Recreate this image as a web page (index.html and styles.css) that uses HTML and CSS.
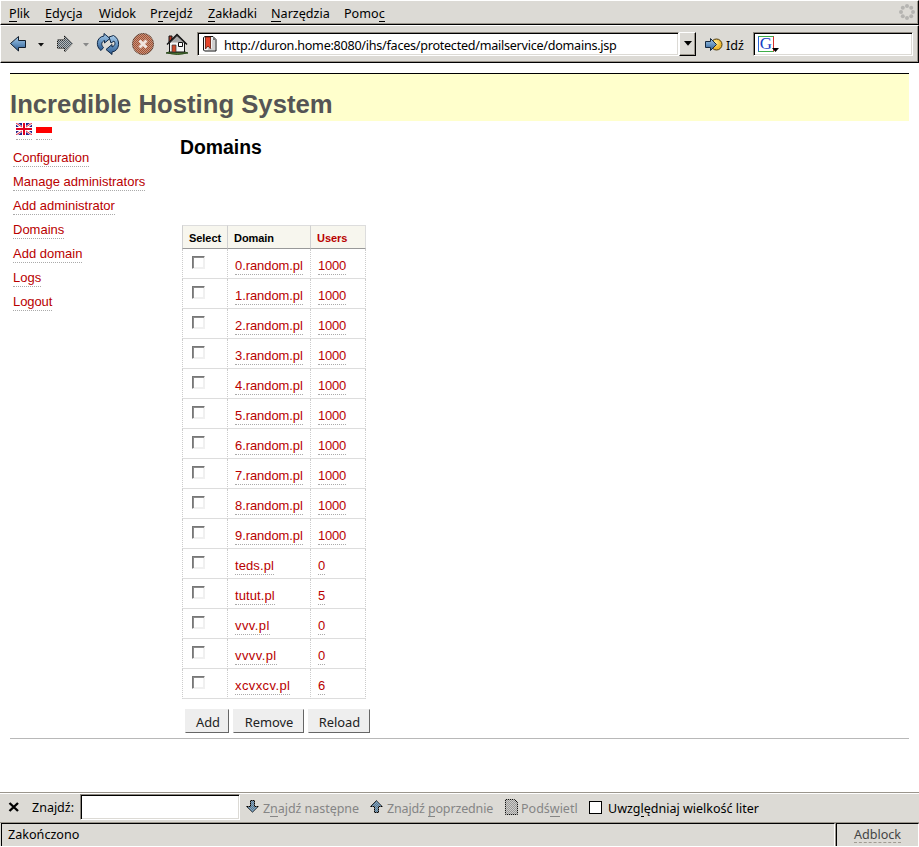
FILE: index.html
```html
<!DOCTYPE html>
<html lang="pl">
<head>
<meta charset="utf-8">
<title>Incredible Hosting System</title>
<link rel="stylesheet" href="styles.css">
</head>
<body>
<svg class="defs" width="0" height="0" aria-hidden="true">
  <defs>
    <linearGradient id="blue" x1="0" y1="0" x2="0" y2="1"><stop offset="0" stop-color="#a9cbe8"/><stop offset=".5" stop-color="#6795c2"/><stop offset="1" stop-color="#2c588d"/></linearGradient>
    <radialGradient id="gold" cx=".4" cy=".35"><stop offset="0" stop-color="#fff0a0"/><stop offset="1" stop-color="#eeb62d"/></radialGradient>
    <pattern id="dither" width="2" height="2" patternUnits="userSpaceOnUse"><path fill="#dcdad5" d="M0 0h1v1H0zM1 1h1v1H1z"/></pattern>
  </defs>
</svg>
<nav class="menubar">
  <span class="m1"><u>P</u>lik</span><span class="m2"><u>E</u>dycja</span><span class="m3"><u>W</u>idok</span><span class="m4">P<u>r</u>zejdź</span><span class="m5"><u>Z</u>akładki</span><span class="m6"><u>N</u>arzędzia</span><span class="m7">Pomo<u>c</u></span>
  <svg class="throbber" width="16" height="16" fill="#b5b4b1"><circle cx="8" cy="2" r="2"/><circle cx="12.2" cy="3.8" r="2"/><circle cx="14" cy="8" r="2"/><circle cx="12.2" cy="12.2" r="2"/><circle cx="8" cy="14" r="2"/><circle cx="3.8" cy="12.2" r="2"/><circle cx="2" cy="8" r="2"/><circle cx="3.8" cy="3.8" r="2"/></svg>
</nav>
<div class="toolbar">
  <svg class="i-back" width="18" height="18"><path d="M1.5 8.5 9.5 1.500v4h7v7h-7v3.500z" fill="url(#blue)" stroke="#111c2b"/></svg>
  <svg class="i-drop" width="6" height="4"><path d="M0 0h6L3 3.5z" fill="#111"/></svg>
  <svg class="i-fwd" width="18" height="18"><path d="M16.500 8.500 8.500 1v4h-7v8h7v4z" fill="#4c5a66" stroke="#111"/><path d="M17 8.500 8 0v5H1v8h7v5z" fill="url(#dither)" opacity=".75"/></svg>
  <svg class="i-drop2" width="6" height="4"><path d="M0 0h6L3 3.500z" fill="#888"/></svg>
  <svg class="i-reload" width="24" height="22"><g fill="url(#blue)" stroke="#0f2745" stroke-linejoin="round"><path d="M5 17.500C-.5 14 0 4 8 3V.5L14 5.500 8.500 10V7.500C5 9 5 12 7.500 14.500z"/><path d="M17.500 2.500C25 6 24 18 16 19v2.500L10 16.500l6-5v2.500c3.500-1.500 3.500-4 2-6L15 10l-2-6z"/></g></svg>
  <svg class="i-stop" width="22" height="22"><circle cx="11" cy="11" r="10.500" fill="#a8502f" stroke="#5b3a2a"/><circle cx="11" cy="11" r="11" fill="url(#dither)" opacity=".5"/><path d="m7.500 7.500 7 7m0-7-7 7" stroke="#f0e4de" stroke-width="3"/></svg>
  <svg class="i-home" width="23" height="22"><path d="M0 20q5-3 11-1 6-2 11 1-10 3-22 0" fill="#507a37" stroke="#2f4c21"/><path d="M3.500 10 11 3l7.500 7v9h-15z" fill="#f4f4f4" stroke="#111"/><path d="M3 3h3v3L3 9z" fill="#b83a27" stroke="#111"/><path d="m11 3 7 6.500H5z" fill="#aaa"/><path d="M1 11.500 11 1.500l10 10" fill="none" stroke="#111" stroke-width="1.500"/><path d="M6 12h4v7H6z" fill="#d24b2b" stroke="#333" stroke-width=".7"/><path d="M12.500 9.500h4v4h-4z" fill="#fff" stroke="#111"/></svg>
  <div class="field url">
    <svg class="i-book" width="14" height="16"><path d="M.5 1.500 2 .5h8l3 3V15H1.500L.5 14z" fill="#f3f3f3" stroke="#111"/><path d="M2.500 1v12l2.500-3 2.500 3V1z" fill="#e5442b" stroke="#5b1509" stroke-width=".8"/><path d="M9 5h3M9 7h3M9 9h3M9 11h3M5 13h7" stroke="#999" stroke-width=".8"/><path d="M10 1v3h3z" fill="#777"/></svg>
    <span class="address">http://duron.home:8080/ihs/faces/protected/mailservice/domains.jsp</span>
  </div>
  <div class="combo"><svg width="8" height="5"><path d="M0 0h8L4 4.700z"/></svg></div>
  <svg class="i-go" width="18" height="16"><circle cx="11.500" cy="7.500" r="5.500" fill="url(#gold)" stroke="#4d3a0a"/><path d="M.5 4.500h5V1.500l6 6-6 6v-3h-5z" fill="url(#blue)" stroke="#14283f"/></svg>
  <span class="go">Idź</span>
  <div class="field search"><div class="g-logo"><span>G</span><svg width="7" height="4"><path d="M0 0h7L3.500 4z"/></svg></div></div>
</div>
<div class="page">
  <h1>Incredible Hosting System</h1>
  <div class="columns">
    <div class="side">
      <div class="flags">
        <a><svg width="16" height="12"><path fill="#fff" d="M0 0h16v12H0z"/><path fill="#24248c" d="M2 0h4v3zM10 0h4l-4 3zM0 1.500 3 4H0zM16 1.500V4h-3zM0 8h3l-3 2.500zM13 8h3v2.500zM6 9v3H2zM10 9l4 3h-4z"/><path d="m0 0 6 4M16 0l-6 4M0 12l6-4m10 4-6-4" stroke="#e2233b"/><path fill="#e2001f" d="M7 0h2v12H7zM0 5h16v2H0z"/></svg></a>
        <a><svg width="16" height="12"><path fill="#fff" d="M0 0h16v6H0z"/><path fill="#f00" d="M0 4h16v6H0z"/></svg></a>
      </div>
      <ul class="links">
        <li><a class="w1">Configuration</a></li><li><a>Manage administrators</a></li><li><a>Add administrator</a></li><li><a>Domains</a></li><li><a>Add domain</a></li><li><a>Logs</a></li><li><a class="w1">Logout</a></li>
      </ul>
    </div>
    <div class="main">
      <h2>Domains</h2>
      <table>
        <thead><tr><th>Select</th><th>Domain</th><th class="sort">Users</th></tr></thead>
        <tbody>
          <tr><td><i></i></td><td><a>0.random.pl</a></td><td><a>1000</a></td></tr>
          <tr><td><i></i></td><td><a>1.random.pl</a></td><td><a>1000</a></td></tr>
          <tr><td><i></i></td><td><a>2.random.pl</a></td><td><a>1000</a></td></tr>
          <tr><td><i></i></td><td><a>3.random.pl</a></td><td><a>1000</a></td></tr>
          <tr><td><i></i></td><td><a>4.random.pl</a></td><td><a>1000</a></td></tr>
          <tr><td><i></i></td><td><a>5.random.pl</a></td><td><a>1000</a></td></tr>
          <tr><td><i></i></td><td><a>6.random.pl</a></td><td><a>1000</a></td></tr>
          <tr><td><i></i></td><td><a>7.random.pl</a></td><td><a>1000</a></td></tr>
          <tr><td><i></i></td><td><a>8.random.pl</a></td><td><a>1000</a></td></tr>
          <tr><td><i></i></td><td><a>9.random.pl</a></td><td><a>1000</a></td></tr>
          <tr><td><i></i></td><td><a class="mid">teds.pl</a></td><td><a>0</a></td></tr>
          <tr><td><i></i></td><td><a class="mid">tutut.pl</a></td><td><a>5</a></td></tr>
          <tr><td><i></i></td><td><a class="wide">vvv.pl</a></td><td><a>0</a></td></tr>
          <tr><td><i></i></td><td><a class="wide">vvvv.pl</a></td><td><a>0</a></td></tr>
          <tr><td><i></i></td><td><a class="wide">xcvxcv.pl</a></td><td><a>6</a></td></tr>
        </tbody>
      </table>
      <div class="buttons"><button class="b1">Add</button><button class="b2">Remove</button><button class="b3">Reload</button></div>
    </div>
  </div>
</div>
<div class="findbar">
  <svg class="i-close" width="12" height="10"><path d="m1.500 1 8.500 8M10 1 1.500 9" stroke="#000" stroke-width="2.400"/></svg>
  <span class="f-label">Znajdź:</span>
  <div class="field find"></div>
  <svg class="i-down" width="14" height="14"><path d="M4.500.5h4v6h4L6.500 12.500.5 6.500h4z" fill="#4f789a" stroke="#000"/><path d="M4 0h5v6h5l-7 8-7-8h4z" fill="url(#dither)" opacity=".45"/></svg>
  <span class="f-next">Z<u>n</u>ajdź następne</span>
  <svg class="i-up" width="14" height="14"><path d="M4.500 12.500h4v-6h4L6.500.5.5 6.500h4z" fill="#4f789a" stroke="#000"/><path d="M4 13h5V7h5L7 0 0 7h4z" fill="url(#dither)" opacity=".45"/></svg>
  <span class="f-prev">Znajdź <u>p</u>oprzednie</span>
  <svg class="i-doc" width="13" height="16"><path d="M.5.500h9l3 3v12H.5z" fill="#999" stroke="#111"/><path d="M0 0h10l3 3v13H0z" fill="url(#dither)" opacity=".8"/></svg>
  <span class="f-mark">Podś<u>w</u>ietl</span>
  <span class="f-box"></span>
  <span class="f-case">Uwzg<u>l</u>ędniaj wielkość liter</span>
</div>
<div class="status"><div class="state">Zakończono</div><div class="adblock"><span>Adblock</span></div></div>
</body>
</html>
```

FILE: styles.css
```css
* { box-sizing: border-box; }
body { margin: 0; width: 919px; height: 847px; display: flex; flex-direction: column; background: #fff; color: #000; font: 12.6px/18px "Noto Sans", sans-serif; overflow: hidden; }
svg { display: block; flex: none; }
.defs { position: absolute; }
u { text-decoration: none; box-shadow: 0 1px 0 currentColor; display: inline-block; line-height: 15px; }
span { white-space: nowrap; }

.menubar, .toolbar { background: #dcdad5; border: 1px solid #000; border-top-color: #fff; border-left-color: #fff; box-shadow: inset -1px -1px 0 #9a958c; display: flex; }
.menubar { height: 25px; padding: 4px 3px 0 8px; }
.menubar span { flex: none; }
.m1 { width: 36px; }
.m2 { width: 54px; }
.m3 { width: 51px; }
.m4 { width: 58px; }
.m5 { width: 63px; }
.m6 { width: 73px; }
.m7 { width: 42px; }
.throbber { margin: -1px 0 0 auto; }
.toolbar { height: 38px; padding-left: 8px; align-items: flex-start; }
.i-back { margin-top: 9px; }
.i-drop { margin: 17px 0 0 11px; }
.i-fwd { margin: 9px 0 0 12px; }
.i-drop2 { margin: 17px 0 0 9px; }
.i-reload { margin: 7px 0 0 7px; }
.i-stop { margin: 7px 0 0 12px; }
.i-home { margin: 7px 0 0 12px; }
.field { background: #fff; border: 1px solid #fff; border-top-color: #8d8880; border-left-color: #8d8880; box-shadow: inset 1px 1px 0 #000, inset -1px -1px 0 #dcdad5; flex: none; }
.url { width: 482px; height: 24px; margin: 6px 0 0 8px; display: flex; }
.i-book { margin: 3px 0 0 5px; }
.address { margin: 4px 0 0 7px; letter-spacing: -.26px; }
.combo { width: 17px; height: 24px; margin-top: 6px; background: #dcdad5; border: 1px solid #000; border-top-color: #fff; border-left-color: #fff; box-shadow: inset -1px -1px 0 #9a958c; padding: 8px 0 0 4px; }
.i-go { margin: 11px 0 0 9px; }
.go { margin: 11px 0 0 3px; width: 27px; }
.search { width: 160px; height: 24px; margin-top: 6px; padding: 3px 0 0 4px; }
.g-logo { position: relative; width: 16px; height: 16px; background: #fff; border: 1px solid; border-color: #3fae49 #d8322c #3fae49 #2b66d9; font: 17px/14px "Liberation Serif", serif; color: #173fc4; text-align: center; }
.g-logo svg { position: absolute; left: 13px; top: 11px; }

.page { flex: 1; padding: 10px 10px 0; font: 13px/16px "Liberation Sans", sans-serif; }
h1 { margin: 0; height: 48px; border-top: 1px solid #000; background: #ffc; color: #555; font: bold 25.7px/30px "Liberation Sans", sans-serif; padding-top: 15px; }
.columns { display: flex; height: 618px; border-bottom: 1px solid #b8b8b8; }
.side { width: 170px; flex: none; padding: 1px 0 0 3px; }
a { color: #b90000; border-bottom: 1px dotted #aaa; }
.flags { display: flex; gap: 4px; padding: 1px 0 0 3px; height: 23px; }
.flags a { height: 17px; }
.links { list-style: none; margin: 0; padding: 0; }
.links li { height: 24px; padding-top: 4px; }
.links a { display: inline-block; height: 18px; line-height: 17px; }
.links .w1 { letter-spacing: -.1px; }
h2 { margin: 0; height: 104px; padding-top: 14px; font: bold 19.4px/24px "Liberation Sans", sans-serif; }
table { margin-left: 2px; width: 184px; border-collapse: separate; border-spacing: 0; table-layout: fixed; }
th { height: 24px; padding: 2px 0 0 6px; font-size: 11px; letter-spacing: -.05px; line-height: 14px; text-align: left; background: #f7f6ee; border-top: 1px solid #ddd; border-bottom: 1px solid #999; border-left: 1px solid #d0d0d0; }
th:first-child { width: 45px; }
th:nth-child(2) { width: 83px; }
th:last-child { width: 56px; border-right: 1px solid #ddd; }
.sort { color: #b90000; }
td { height: 30px; padding: 8px 0 0 7px; vertical-align: top; border-left: 1px dotted #ccc; border-bottom: 1px solid #ddd; }
td:last-child { border-right: 1px dotted #ccc; }
td:first-child { padding: 7px 0 0 9px; }
td a { display: inline-block; height: 18px; line-height: 17px; letter-spacing: -.08px; }
td:last-child a { letter-spacing: -.2px; }
td i { display: block; width: 13px; height: 13px; border: 1px solid #f0f0f0; border-top-color: #777; border-left-color: #777; box-shadow: inset 1px 1px 0 #8c8c8c, inset -1px -1px 0 #f0f0f0; }
td .mid { letter-spacing: .1px; }
td .wide { letter-spacing: .4px; }
.buttons { display: flex; padding: 10px 0 0 5px; }
button { height: 24px; margin: 0; padding: 2px 0 0 1px; background: #eee; border: 1px solid; border-color: #eee #666 #666 #eee; color: #222; font: 12.9px/18px "Noto Sans", sans-serif; }
.b1 { width: 44px; margin-right: 4px; padding-left: 2px; }
.b2 { width: 71px; margin-right: 4px; }
.b3 { width: 62px; }

.findbar { height: 31px; background: #dcdad5; border-top: 1px solid #9a958c; border-bottom: 1px solid #9a958c; box-shadow: inset 0 1px 0 #fff; padding-left: 8px; display: flex; align-items: flex-start; font-size: 12.5px; }
.findbar > span { margin-top: 7px; flex: none; }
.i-close { margin-top: 9px; }
.f-label { width: 48px; margin-left: 12px; }
.findbar > .f-label { margin-top: 6px; }
.find { width: 160px; height: 26px; margin-top: 1px; }
.i-down { margin: 7px 0 0 6px; }
.f-next { margin-left: 3px; width: 107px; letter-spacing: -.05px; color: #858585; }
.i-up { margin-top: 7px; }
.f-prev { margin-left: 3px; width: 118px; letter-spacing: -.15px; color: #858585; }
.i-doc { margin-top: 6px; }
.f-mark { margin-left: 3px; width: 68px; color: #858585; }
.findbar > .f-box { width: 13px; height: 13px; border: 1px solid #000; background: #fff; margin-top: 8px; }
.f-case { margin-left: 6px; }
.status { height: 24px; background: #dcdad5; border-bottom: 1px solid #fff; display: flex; }
.state { width: 834px; margin-left: 1px; border: 1px solid #000; border-right-color: #fff; border-bottom: 0; padding: 1px 0 0 6px; line-height: 20px; }
.adblock { flex: 1; margin-left: 1px; border: 1px solid #000; border-right-color: #fff; border-bottom: 0; box-shadow: -1px 0 0 #9a958c; text-align: center; color: #444; padding-top: 2px; }
.adblock span { display: inline-block; height: 17px; border-bottom: 1px dashed #a09b92; }
```
